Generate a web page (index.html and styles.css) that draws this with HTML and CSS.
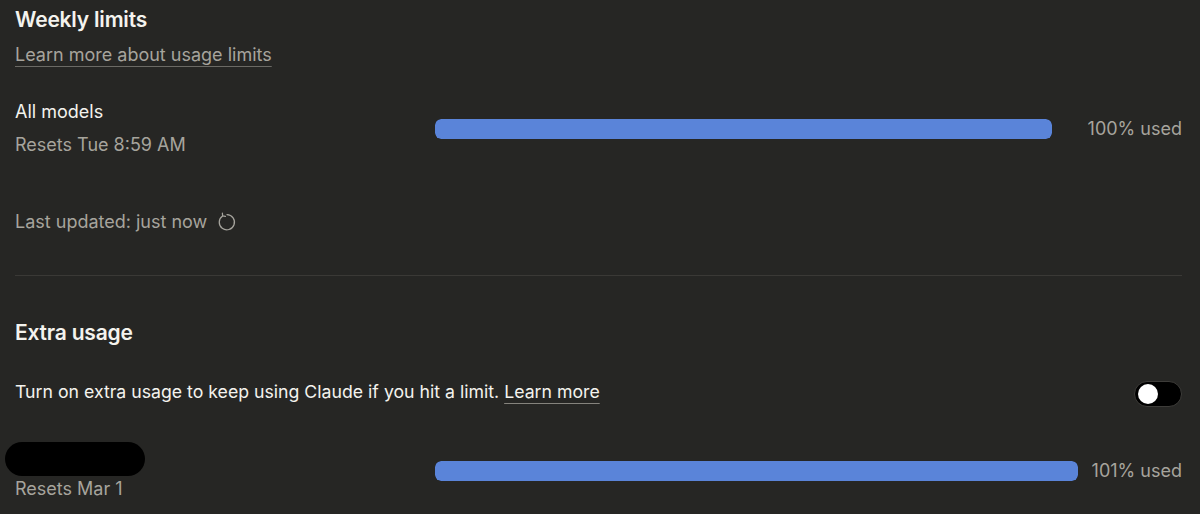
FILE: index.html
```html
<!DOCTYPE html>
<html lang="en">
<head>
<meta charset="utf-8">
<link rel="stylesheet" href="styles.css">
</head>
<body>
<main class="page">
  <section class="section">
    <h2 class="title">Weekly limits</h2>
    <a class="sub-link" href="#">Learn more about usage limits</a>
    <div class="usage-row first">
      <div class="usage-info">
        <div class="usage-name">All models</div>
        <div class="usage-reset">Resets Tue 8:59 AM</div>
      </div>
      <div class="bar"><div class="bar-fill"></div></div>
      <div class="usage-pct wide">100% used</div>
    </div>
    <div class="updated">
      <span>Last updated: just now</span>
      <svg class="refresh" viewBox="0 0 20 20" width="20" height="20" fill="none" stroke="currentColor" stroke-width="1.25" stroke-linecap="round" stroke-linejoin="round">
        <path d="M5.6 3.9A7.6 7.6 0 1 0 10 2.6"/>
        <path d="M5.4 1.2 5.6 3.9 8.4 4.3"/>
      </svg>
    </div>
  </section>
  <hr class="divider">
  <section class="section">
    <h2 class="title extra">Extra usage</h2>
    <div class="toggle-row">
      <p class="toggle-text">Turn on extra usage to keep using Claude if you hit a limit. <a href="#" class="inline-link">Learn more</a></p>
      <span class="switch"><span class="knob"></span></span>
    </div>
    <div class="usage-row second">
      <div class="usage-info">
        <div class="redacted"></div>
        <div class="usage-reset">Resets Mar 1</div>
      </div>
      <div class="bar"><div class="bar-fill"></div></div>
      <div class="usage-pct narrow">101% used</div>
    </div>
  </section>
</main>
</body>
</html>
```
FILE: styles.css
```css
* { box-sizing: border-box; }
html, body {
  margin: 0;
  background: #262624;
  height: 514px;
  overflow: hidden;
}
body {
  font-family: Inter, "Liberation Sans", sans-serif;
  color: #f4f3ee;
}
.page {
  padding: 6px 18px 0 15px;
}
.title {
  margin: 0;
  font-size: 21px;
  font-weight: 600;
  line-height: 28px;
  letter-spacing: -0.2px;
}
.sub-link {
  display: inline-block;
  margin-top: 9px;
  color: #a6a49d;
  font-size: 18px;
  line-height: 24px;
  text-decoration: underline;
  text-decoration-color: #6b6a65;
  text-underline-offset: 5px;
  text-decoration-thickness: 1px;
}
.usage-row {
  display: flex;
  align-items: center;
}
.usage-row.first { margin-top: 33px; }
.usage-info {
  width: 420px;
  flex: none;
}
.usage-name {
  font-size: 18px;
  line-height: 24px;
  color: #f4f3ee;
}
.usage-reset {
  margin-top: 9px;
  font-size: 18px;
  line-height: 24px;
  color: #a6a49d;
}
.bar {
  flex: 1;
  height: 20px;
  border-radius: 6px;
  background: #1f1e1d;
  overflow: hidden;
}
.bar-fill {
  width: 100%;
  height: 100%;
  background: #5a84d9;
  border-radius: 6px;
}
.usage-pct {
  flex: none;
  text-align: right;
  font-size: 18px;
  line-height: 24px;
  color: #a6a49d;
}
.usage-pct.wide { width: 130px; }
.usage-pct.narrow { width: 104px; }
.updated {
  display: flex;
  align-items: center;
  gap: 10px;
  margin-top: 53px;
  font-size: 18px;
  line-height: 24px;
  color: #a6a49d;
}
.refresh { color: #a6a49d; }
.divider {
  border: 0;
  border-top: 1px solid #3a3936;
  margin: 41px 0 0 0;
}
.title.extra { margin-top: 43px; }
.toggle-row {
  display: flex;
  align-items: center;
  justify-content: space-between;
  margin-top: 29px;
}
.toggle-text {
  margin: 0;
  font-size: 17.7px;
  line-height: 24px;
  color: #f4f3ee;
}
.inline-link {
  color: #f4f3ee;
  text-decoration: underline;
  text-decoration-color: #85837d;
  text-underline-offset: 5px;
}
.switch {
  width: 48px;
  height: 26px;
  border-radius: 13px;
  background: #000;
  border: 1px solid #3d3c39;
  position: relative;
  flex: none;
  margin-top: 5px;
}
.knob {
  position: absolute;
  left: 3px;
  top: 2px;
  width: 20px;
  height: 20px;
  border-radius: 50%;
  background: #fff;
}
.usage-row.second {
  margin-top: 35px;
  align-items: flex-end;
}
.redacted {
  width: 140px;
  height: 34px;
  margin-left: -10px;
  background: #000;
  border-radius: 17px;
}
.second .usage-reset { margin-top: 1px; }
.second .bar { margin-bottom: 20px; }
.second .usage-pct { margin-bottom: 18px; }
```
